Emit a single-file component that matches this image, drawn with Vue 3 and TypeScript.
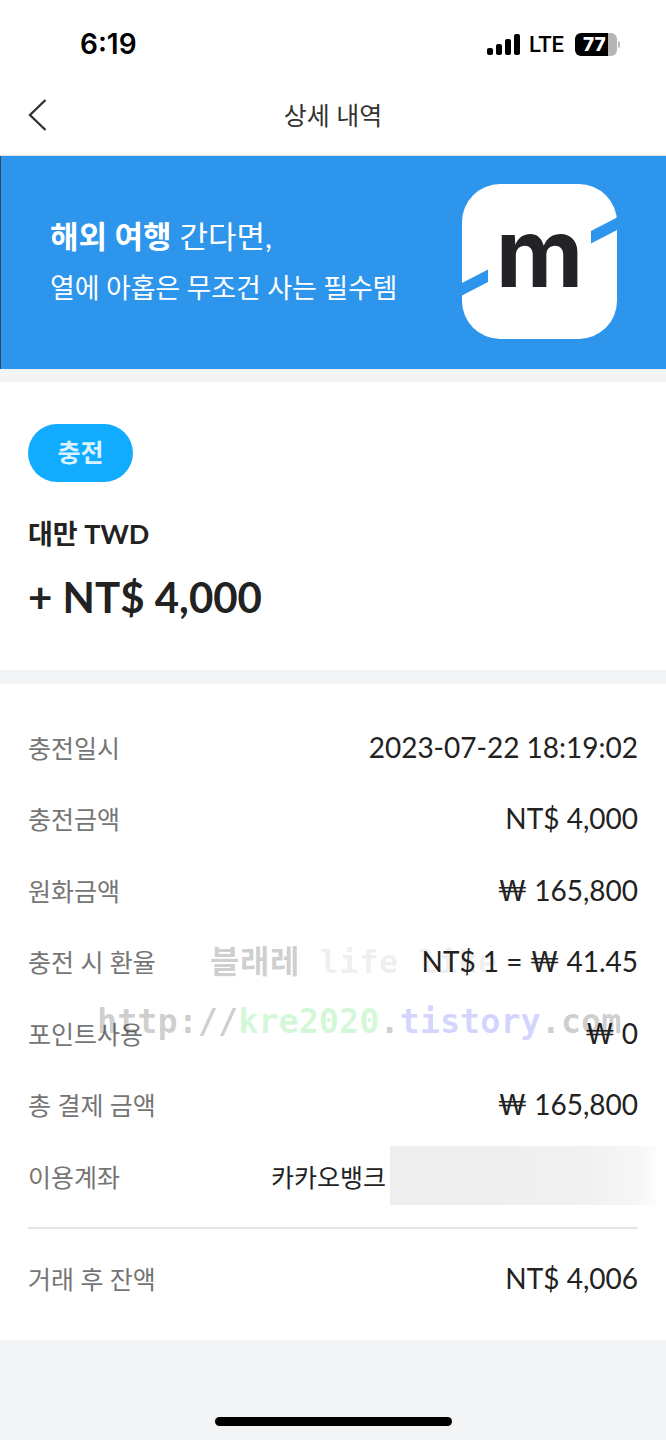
<script setup lang="ts">
interface Row {
  label: string
  value: string
}

const rows: Row[] = [
  { label: '충전일시', value: '2023-07-22 18:19:02' },
  { label: '충전금액', value: 'NT$ 4,000' },
  { label: '원화금액', value: '₩ 165,800' },
  { label: '충전 시 환율', value: 'NT$ 1 = ₩ 41.45' },
  { label: '포인트사용', value: '₩ 0' },
  { label: '총 결제 금액', value: '₩ 165,800' },
]
</script>

<template>
  <div class="page">
    <div class="status-bar">
      <span class="time">6:19</span>
      <div class="status-right">
        <div class="signal">
          <i class="s1"></i><i class="s2"></i><i class="s3"></i><i class="s4"></i>
        </div>
        <span class="lte">LTE</span>
        <div class="battery">
          <div class="battery-body"><span>77</span></div>
          <div class="battery-cap"></div>
        </div>
      </div>
    </div>

    <header class="nav">
      <svg class="back" width="22" height="34" viewBox="0 0 22 34" fill="none">
        <path d="M18.5 2 L3 17 L18.5 32" stroke="#333" stroke-width="2.4" />
      </svg>
      <h1 class="nav-title">상세 내역</h1>
    </header>

    <section class="banner">
      <div class="banner-text">
        <p class="banner-top"><b>해외 여행</b> 간다면,</p>
        <p class="banner-sub">열에 아홉은 무조건 사는 필수템</p>
      </div>
      <svg class="logo" width="155" height="155" viewBox="0 0 155 155">
        <rect width="155" height="155" rx="38" fill="#fff" />
        <path d="M-2 100 L26 85.500 L26 98 L-2 112.500 Z" fill="#2d95ec" />
        <path d="M129 47 L157 32.500 L157 45 L129 59.500 Z" fill="#2d95ec" />
        <text x="77.500" y="103" text-anchor="middle" class="logo-m">m</text>
      </svg>
    </section>

    <section class="card summary">
      <span class="chip">충전</span>
      <div class="currency">대만 TWD</div>
      <div class="amount">+ NT$ 4,000</div>
    </section>

    <section class="card details">
      <div v-for="row in rows" :key="row.label" class="row">
        <span class="label">{{ row.label }}</span>
        <span class="value">{{ row.value }}</span>
      </div>
      <div class="row">
        <span class="label">이용계좌</span>
        <div class="account">
          <span class="value">카카오뱅크</span>
          <div class="masked"></div>
        </div>
      </div>
      <div class="divider"></div>
      <div class="row balance">
        <span class="label">거래 후 잔액</span>
        <span class="value">NT$ 4,006</span>
      </div>
    </section>

    <div class="home-bar"></div>

    <div class="mark mark-top">블래레 <em>life like</em></div>
    <div class="mark mark-url">
      http://<span class="green">kre2020</span><span class="dot">.</span><span class="blue">tistory</span>.com
    </div>
  </div>
</template>

<style>
html,
body {
  margin: 0;
  background: #f3f4f6;
}
</style>

<style scoped>
.page {
  position: relative;
  width: 666px;
  height: 1440px;
  overflow: hidden;
  background: #f3f4f6;
  font-family: Lato, "Noto Sans CJK KR", sans-serif;
  color: #222;
}

.status-bar {
  height: 76px;
  background: #fff;
  display: flex;
  justify-content: space-between;
  align-items: center;
  padding: 12px 46px 0 80px;
  box-sizing: border-box;
}

.time {
  font-family: Inter, sans-serif;
  font-size: 28px;
  font-weight: 600;
  color: #000;
}

.status-right {
  display: flex;
  align-items: center;
  gap: 9px;
}

.signal {
  display: flex;
  align-items: flex-end;
  gap: 3px;
  height: 21px;
}

.signal i {
  width: 6px;
  background: #000;
  border-radius: 2px;
}

.s1 { height: 7px; }
.s2 { height: 11px; }
.s3 { height: 16px; }
.s4 { height: 21px; }

.lte {
  font-family: Roboto, sans-serif;
  font-size: 22px;
  font-weight: 500;
  color: #000;
}

.battery {
  display: flex;
  align-items: center;
  gap: 1px;
  margin-left: 2px;
}

.battery-body {
  width: 42px;
  height: 23px;
  border-radius: 6px;
  background: linear-gradient(90deg, #000 0 78%, #b5b5b5 78%);
  color: #fff;
  font-family: Inter, sans-serif;
  font-size: 19px;
  font-weight: 800;
  line-height: 23px;
  padding-left: 8px;
  box-sizing: border-box;
}

.battery-cap {
  width: 2px;
  height: 7px;
  background: #bbb;
  border-radius: 0 2px 2px 0;
}

.nav {
  position: relative;
  height: 80px;
  background: #fff;
  border-bottom: 1px solid #dfe3e8;
  display: flex;
  align-items: center;
  justify-content: center;
  padding-bottom: 3px;
  box-sizing: border-box;
}

.back {
  position: absolute;
  left: 27px;
  top: 22px;
}

.nav-title {
  margin: 0;
  font-size: 25px;
  font-weight: 400;
  color: #333;
}

.banner {
  height: 213px;
  background: #2d95ec;
  border-left: 1px solid #2b4a63;
  box-sizing: border-box;
  display: flex;
  align-items: center;
  justify-content: space-between;
  padding: 0 49px 3px 49px;
  color: #fff;
}

.banner-text p {
  margin: 0;
}

.banner-top {
  font-size: 31px;
  line-height: 46px;
  font-weight: 400;
}

.banner-top b {
  font-weight: 700;
}

.banner-sub {
  font-size: 27px;
  line-height: 42px;
  margin-top: 8px !important;
  font-weight: 400;
  letter-spacing: -0.2px;
}

.logo {
  overflow: hidden;
}

.logo-m {
  font-family: Inter, sans-serif;
  font-size: 96px;
  font-weight: 700;
  fill: #212327;
}

.card {
  background: #fff;
}

.summary {
  margin-top: 13px;
  height: 288px;
  padding: 42px 28px 0;
  box-sizing: border-box;
}

.chip {
  display: block;
  width: 105px;
  height: 58px;
  border-radius: 29px;
  background: #11acff;
  color: #d8f2ff;
  font-size: 25px;
  font-weight: 700;
  line-height: 56px;
  text-align: center;
}

.currency {
  margin-top: 32px;
  font-size: 27px;
  font-weight: 700;
  line-height: 40px;
}

.amount {
  margin-top: 18px;
  font-size: 42px;
  font-weight: 700;
  line-height: 50px;
  color: #222;
}

.details {
  margin-top: 14px;
  height: 656px;
  padding: 27px 28px 0;
  box-sizing: border-box;
}

.row {
  height: 71.500px;
  display: flex;
  align-items: center;
  justify-content: space-between;
}

.label {
  font-size: 25px;
  color: #757575;
}

.value {
  font-size: 28px;
  color: #222;
  white-space: nowrap;
}

.account {
  display: flex;
  align-items: center;
  gap: 4px;
  margin-right: -18px;
}

.account .value {
  font-size: 25px;
}

.masked {
  width: 266px;
  height: 59px;
  background: linear-gradient(90deg, #eeeeee 0%, #f0f0f0 70%, #f6f6f6 92%, #fcfcfc 100%);
}

.divider {
  height: 2px;
  margin-top: 15px;
  background: #e5e5e5;
}

.balance {
  margin-top: 14px;
}

.home-bar {
  position: absolute;
  left: 215px;
  top: 1417px;
  width: 237px;
  height: 9px;
  border-radius: 5px;
  background: #000;
}

.mark {
  position: absolute;
  white-space: nowrap;
  font-family: "DejaVu Sans Mono", "Noto Sans CJK KR", monospace;
  font-weight: 700;
  pointer-events: none;
}

.mark-top {
  left: 210px;
  top: 940px;
  font-size: 32px;
  line-height: 44px;
  color: rgba(0, 0, 0, 0.2);
  letter-spacing: 0.5px;
}

.mark-top em {
  font-style: normal;
  color: rgba(0, 0, 0, 0.08);
}

.mark-url {
  left: 97px;
  top: 1000px;
  font-size: 33.500px;
  line-height: 44px;
  color: rgba(0, 0, 0, 0.2);
}

.green {
  color: rgba(60, 220, 80, 0.22);
}

.blue {
  color: rgba(60, 60, 255, 0.22);
}
</style>
